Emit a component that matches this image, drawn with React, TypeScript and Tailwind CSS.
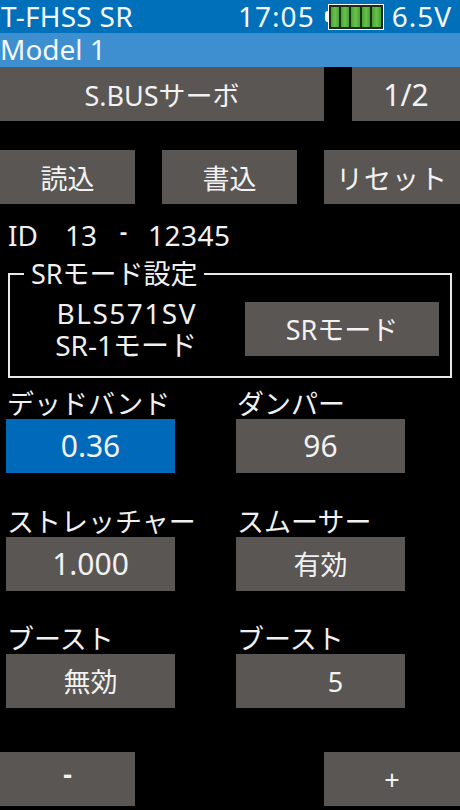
const font = "font-['Noto_Sans','Noto_Sans_CJK_JP',sans-serif]";

function Btn({ className, children }: { className: string; children: React.ReactNode }) {
  return (
    <div className={`flex h-[54px] items-center justify-center bg-[#5a5653] text-[27px] leading-none text-[#f2f2f2] ${className}`}>
      {children}
    </div>
  );
}

function Num({ children, className = "" }: { children: React.ReactNode; className?: string }) {
  return <span className={`text-[30px] ${className}`}>{children}</span>;
}

function Field({ label, children, active, className }: { label: string; children: React.ReactNode; active?: boolean; className: string }) {
  return (
    <div className={`flex w-[169px] flex-col ${className}`}>
      <div className="h-[30px] whitespace-nowrap pl-[1px] text-[27px] leading-[30px] text-[#f0f0f0]">{label}</div>
      <Btn className={active ? "w-full !bg-[#0069b9]" : "w-full"}>{children}</Btn>
    </div>
  );
}

function Battery() {
  return (
    <div className="flex items-center">
      <div className="h-[11px] w-[3px] rounded-l-sm bg-white" />
      <div className="flex h-[26px] w-[56px] gap-[2px] border border-white bg-[#1d2a1a] p-[2px]">
        {[0, 1, 2, 3, 4].map((i) => (
          <div key={i} className="flex-1 bg-linear-to-r from-[#43a533] via-[#6cc04a] to-[#43a533]" />
        ))}
      </div>
    </div>
  );
}

export default function App() {
  return (
    <div className={`flex h-[810px] w-[460px] flex-col overflow-hidden bg-black ${font}`}>
      <div className="flex h-[33px] items-center justify-between bg-[#0070bb] pl-[1px] pr-[8px] text-[28px] leading-none text-[#f4f8fb]">
        <span className="-translate-y-[1px] tracking-[0.25px]">T-FHSS SR</span>
        <div className="flex items-center gap-[6px]">
          <span className="mr-[4px] -translate-y-[1px] tracking-[1px]">17:05</span>
          <Battery />
          <span className="ml-[2px] -translate-y-[1px] tracking-[1px]">6.5V</span>
        </div>
      </div>
      <div className="flex h-[34px] items-center bg-[#3e8fd0] pb-[3px] text-[28px] leading-none text-[#f4f8fb]">Model 1</div>

      <div className="flex justify-between">
        <Btn className="w-[324px] pt-[2px]">S.BUSサーボ</Btn>
        <Btn className="w-[108px] pt-[2px]"><Num>1/2</Num></Btn>
      </div>

      <div className="mt-[29px] flex justify-between">
        <Btn className="w-[135px] pt-[2px]">読込</Btn>
        <Btn className="w-[135px] pt-[2px]">書込</Btn>
        <Btn className="w-[136px] pt-[2px] tracking-[1px]">リセット</Btn>
      </div>

      <div className="mt-[14px] flex h-[34px] items-center pl-[8px] text-[28px] leading-none text-[#f0f0f0]">
        <span className="w-[57px]">ID</span>
        <span className="w-[55px]">13</span>
        <span className="w-[28px] -translate-y-[5px] text-[22px] font-bold">-</span>
        <span className="tracking-[0.5px]">12345</span>
      </div>

      <fieldset className="mx-[8px] mt-[7px] h-[119px] border-2 border-[#e8e8e8] pl-[13px] pr-[11px]">
        <legend className="ml-[1px] px-[7px] pr-[6px] text-[27px] leading-[30px] text-[#f0f0f0]">SRモード設定</legend>
        <div className="mt-[8px] flex items-center justify-between">
          <div className="w-[174px] text-right text-[28px] leading-[32px] text-[#f0f0f0]">
            <div className="tracking-[1.5px]">BLS571SV</div>
            <div>SR-1モード</div>
          </div>
          <Btn className="w-[194px]">SRモード</Btn>
        </div>
      </fieldset>

      <div className="mt-[11px] flex">
        <Field className="ml-[6px]" label="デッドバンド" active><Num>0.36</Num></Field>
        <Field className="ml-[61px]" label="ダンパー"><Num>96</Num></Field>
      </div>
      <div className="mt-[34px] flex">
        <Field className="ml-[6px]" label="ストレッチャー"><Num>1.000</Num></Field>
        <Field className="ml-[61px]" label="スムーサー">有効</Field>
      </div>
      <div className="mt-[33px] flex">
        <Field className="ml-[6px]" label="ブースト">無効</Field>
        <Field className="ml-[61px]" label="ブースト"><span className="ml-[30px]">5</span></Field>
      </div>

      <div className="mt-[44px] flex justify-between">
        <Btn className="w-[135px]"><span className="-translate-y-[6px] font-bold">-</span></Btn>
        <Btn className="w-[136px]">+</Btn>
      </div>
    </div>
  );
}
